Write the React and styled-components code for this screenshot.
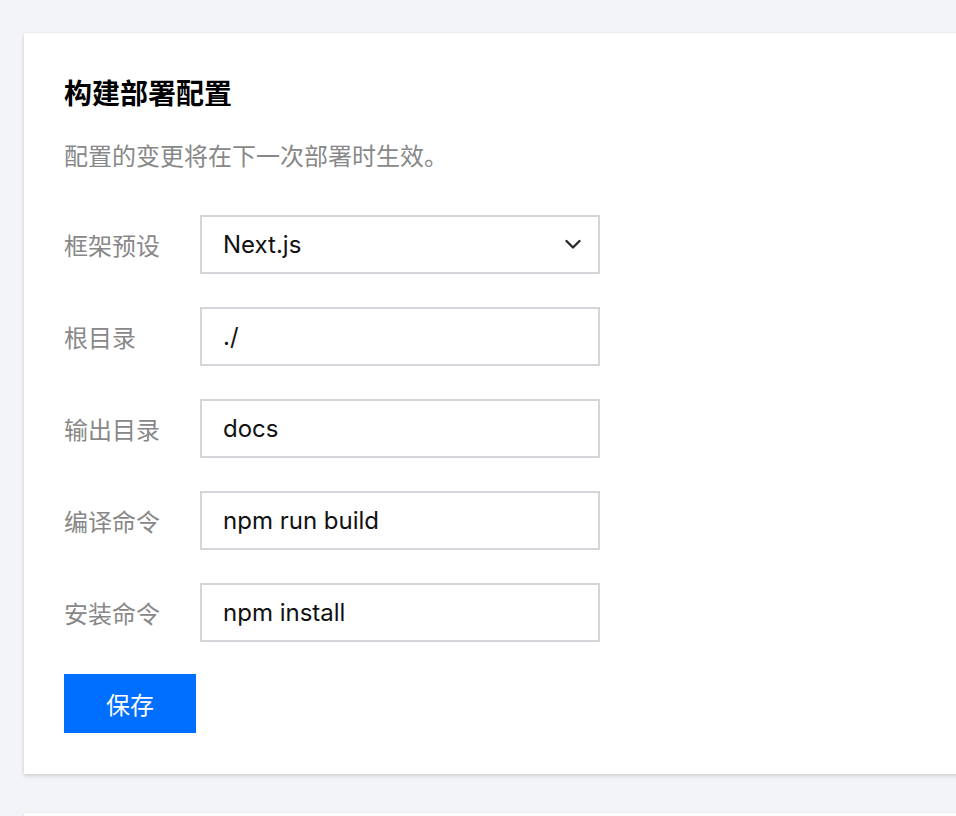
import React from "react";
import styled, { createGlobalStyle } from "styled-components";

const GlobalStyle = createGlobalStyle`
  html, body {
    margin: 0;
    padding: 0;
    background: #f3f4f7;
    overflow: hidden;
    font-family: Inter, "Noto Sans CJK SC", sans-serif;
  }
`;

const Page = styled.div`
  display: flex;
  flex-direction: column;
  gap: 39px;
  padding: 33px 0 0 24px;
  width: 1100px;
`;

const Card = styled.section`
  background: #fff;
  box-shadow: 0 2px 4px rgba(0, 0, 0, 0.14), 0 0 2px rgba(0, 0, 0, 0.06);
  padding: 40px 40px 41px;
  min-height: ${(p) => p.$minHeight || "auto"};
`;

const Title = styled.h2`
  margin: 0;
  font-size: 28px;
  line-height: 42px;
  font-weight: 700;
  color: #000;
`;

const Subtitle = styled.p`
  margin: 24px 0 40px;
  font-size: 24px;
  line-height: 36px;
  color: #888;
`;

const Form = styled.div`
  display: flex;
  flex-direction: column;
  gap: 33px;
`;

const Row = styled.div`
  display: flex;
  align-items: center;
`;

const Label = styled.label`
  width: 136px;
  font-size: 24px;
  color: #888;
`;

const Field = styled.div`
  box-sizing: border-box;
  width: 400px;
  height: 59px;
  border: 2px solid #d4d6db;
  padding: 0 17px 0 21px;
  display: flex;
  align-items: center;
  justify-content: space-between;
  font-size: 24px;
  color: #111;
`;

const Button = styled.button`
  margin-top: 32px;
  width: 132px;
  height: 59px;
  border: none;
  background: #006eff;
  color: #fff;
  font-family: inherit;
  font-size: 24px;
  cursor: pointer;
`;

const Chevron = () => (
  <svg width="16" height="11" viewBox="0 0 16 11" fill="none">
    <path d="M1.5 2 L8 8.5 L14.5 2" stroke="#2b2b2b" strokeWidth="2.4" strokeLinecap="round" strokeLinejoin="round" />
  </svg>
);

const fields = [
  { label: "框架预设", value: "Next.js", select: true },
  { label: "根目录", value: "./" },
  { label: "输出目录", value: "docs" },
  { label: "编译命令", value: "npm run build" },
  { label: "安装命令", value: "npm install" },
];

export default function App() {
  return (
    <>
      <GlobalStyle />
      <Page>
        <Card>
          <Title>构建部署配置</Title>
          <Subtitle>配置的变更将在下一次部署时生效。</Subtitle>
          <Form>
            {fields.map((f) => (
              <Row key={f.label}>
                <Label>{f.label}</Label>
                <Field>
                  <span>{f.value}</span>
                  {f.select && <Chevron />}
                </Field>
              </Row>
            ))}
          </Form>
          <Button>保存</Button>
        </Card>
        <Card $minHeight="200px" />
      </Page>
    </>
  );
}
